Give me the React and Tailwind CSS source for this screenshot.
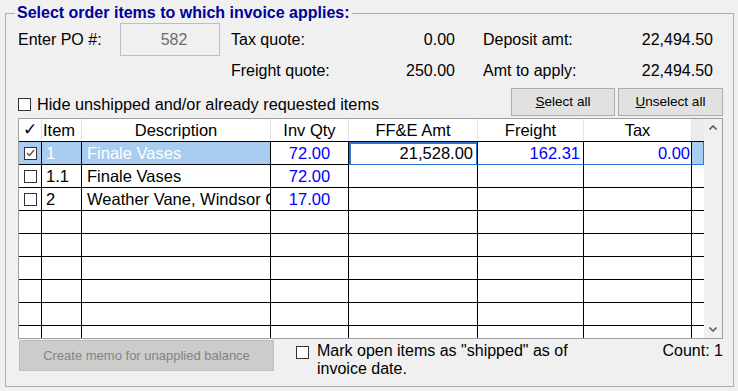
import { useState } from "react";

const rows = [
  { item: "1", desc: "Finale Vases", qty: "72.00", ffe: "21,528.00", freight: "162.31", tax: "0.00", checked: true, selected: true },
  { item: "1.1", desc: "Finale Vases", qty: "72.00" },
  { item: "2", desc: "Weather Vane, Windsor Castle", qty: "17.00" },
  {},
  {},
  {},
  {},
  {},
  {},
];

function CheckBox({ checked, onClick }) {
  return (
    <span
      onClick={onClick}
      className="w-[13px] h-[13px] border border-[#333333] bg-white flex items-center justify-center shrink-0"
    >
      {checked && (
        <svg width="9" height="8" viewBox="0 0 9 8">
          <polyline points="1,4 3.5,6.5 8,1" fill="none" stroke="#555" strokeWidth="1.4" />
        </svg>
      )}
    </span>
  );
}

function Chevron({ up }) {
  return (
    <svg width="8" height="5" viewBox="0 0 8 5">
      <polyline
        points={up ? "0.5,4.5 4,1 7.5,4.5" : "0.5,0.5 4,4 7.5,0.5"}
        fill="none"
        stroke="#606060"
        strokeWidth="1.6"
      />
    </svg>
  );
}

function GridRow({ row, onToggle }) {
  const sel = row.selected;
  const cellBorder = "border-r border-b border-black h-[23px] shrink-0 flex items-center overflow-hidden whitespace-nowrap";
  const hiBorder = sel ? "border-b-[#2a77d1]" : "";
  return (
    <div className="flex">
      <div className={`${cellBorder} w-[23px] justify-center ${sel ? "bg-[#a8cdf0]" : ""}`}>
        {row.item !== undefined && <CheckBox checked={row.checked} onClick={onToggle} />}
      </div>
      <div className={`${cellBorder} w-[40px] pl-[4px] ${sel ? "bg-[#a8cdf0] text-white" : ""}`}>{row.item}</div>
      <div className={`${cellBorder} w-[189px] pl-[5px] ${sel ? "bg-[#a8cdf0] text-white" : ""}`}>{row.desc}</div>
      <div className={`${cellBorder} w-[78px] justify-center text-[#0000ff]`}>{row.qty}</div>
      <div
        className={`${cellBorder} ${hiBorder} w-[129px] justify-end pr-[4px] ${
          sel ? "shadow-[inset_2px_0_0_#2a77d1,inset_0_2px_0_#2a77d1,inset_-1px_0_0_#2a77d1]" : ""
        }`}
      >
        {row.ffe}
      </div>
      <div className={`${cellBorder} ${hiBorder} w-[106px] justify-end pr-[3px] text-[#0000ff]`}>{row.freight}</div>
      <div className={`${cellBorder} ${hiBorder} w-[108px] justify-end pr-[1px] text-[#0000ff]`}>{row.tax}</div>
      <div
        className={`h-[23px] w-[12px] shrink-0 border-b ${
          sel ? "bg-[#a8cdf0] border-b-[#2a77d1] border-r border-r-[#2a77d1]" : "border-black"
        }`}
      />
    </div>
  );
}

export default function App() {
  const [hide, set_hide] = useState(false);
  const [mark, set_mark] = useState(false);
  const [checks, set_checks] = useState(rows.map((r) => !!r.checked));

  const head = "h-[22px] shrink-0 flex items-center justify-center border-r border-[#e3e3e3]";

  return (
    <div className="w-[738px] h-[391px] bg-[#f0f0f0] pt-[4px] px-[5px] font-['Liberation_Sans',Arial,sans-serif] text-[16px] text-black overflow-hidden">
      <fieldset className="border border-[#adadad] h-[383px] pl-[12px] pr-[10px]">
        <legend className="-ml-[3px] px-[2px] font-bold text-[#000099] leading-[18px]">
          Select order items to which invoice applies:
        </legend>

        {/* row 1 */}
        <div className="flex items-center h-[33px] mt-[1px]">
          <div className="w-[102px]">Enter PO #:</div>
          <div className="w-[100px] h-[33px] border border-[#b7bfcc] bg-[#f0f0f0] flex items-center justify-center pl-[8px] text-[#6d6d6d]">
            582
          </div>
          <div className="ml-[11px] w-[224px] flex justify-between">
            <span>Tax quote:</span>
            <span>0.00</span>
          </div>
          <div className="ml-[28px] w-[230px] flex justify-between">
            <span>Deposit amt:</span>
            <span>22,494.50</span>
          </div>
        </div>

        {/* row 2 */}
        <div className="flex items-center h-[24px] mt-[3px]">
          <div className="ml-[213px] w-[224px] flex justify-between">
            <span>Freight quote:</span>
            <span>250.00</span>
          </div>
          <div className="ml-[28px] w-[230px] flex justify-between">
            <span>Amt to apply:</span>
            <span>22,494.50</span>
          </div>
        </div>

        {/* row 3 */}
        <div className="flex justify-between items-start h-[28px] mt-[5px]">
          <label className="flex items-center gap-[6px] mt-[8px] leading-[17px] text-[16.3px]" onClick={() => set_hide(!hide)}>
            <CheckBox checked={hide} />
            <span>Hide unshipped and/or already requested items</span>
          </label>
          <div className="flex gap-[3px] text-[13.5px]">
            <button className="w-[104px] h-[28px] bg-[#e1e1e1] border border-[#adadad]">
              <u>S</u>elect all
            </button>
            <button className="w-[105px] h-[28px] bg-[#e1e1e1] border border-[#adadad]">
              <u>U</u>nselect all
            </button>
          </div>
        </div>

        {/* grid */}
        <div className="mt-[2px] w-[705px] h-[221px] border border-[#a0a0a0] bg-white flex overflow-hidden text-[16.5px]">
          <div className="w-[685px] shrink-0">
            <div className="flex border-b border-black">
              <div className={`${head} w-[23px] font-['DejaVu_Sans',sans-serif] text-[17px] font-bold`}>✓</div>
              <div className={`${head} w-[40px] justify-start! pl-[1px]`}>Item</div>
              <div className={`${head} w-[189px]`}>Description</div>
              <div className={`${head} w-[78px]`}>Inv Qty</div>
              <div className={`${head} w-[129px]`}>FF&amp;E Amt</div>
              <div className={`${head} w-[106px]`}>Freight</div>
              <div className={`${head} w-[108px]`}>Tax</div>
              <div className="h-[22px] w-[12px] bg-[#ececec]" />
            </div>
            {rows.map((r, i) => (
              <GridRow
                key={i}
                row={{ ...r, checked: checks[i] }}
                onToggle={() => set_checks(checks.map((c, j) => (j === i ? !c : c)))}
              />
            ))}
          </div>
          <div className="w-[18px] bg-[#f0f0f0] flex flex-col items-center justify-between pt-[6px] pb-[6px]">
            <Chevron up />
            <Chevron />
          </div>
        </div>

        {/* bottom */}
        <div className="flex items-start mt-[1px]">
          <button
            disabled
            className="ml-[1px] w-[255px] h-[31px] bg-[#cccccc] border border-[#bfbfbf] text-[13px] text-[#838383]"
          >
            Create memo for unapplied balance
          </button>
          <div className="ml-[22px] mt-[6px]" onClick={() => set_mark(!mark)}>
            <CheckBox checked={mark} />
          </div>
          <div className="ml-[8px] mt-[2px] w-[260px] leading-[18px]">
            Mark open items as "shipped" as of invoice date.
          </div>
          <div className="ml-auto mt-[2px] leading-[18px]">Count: 1</div>
        </div>
      </fieldset>
    </div>
  );
}
